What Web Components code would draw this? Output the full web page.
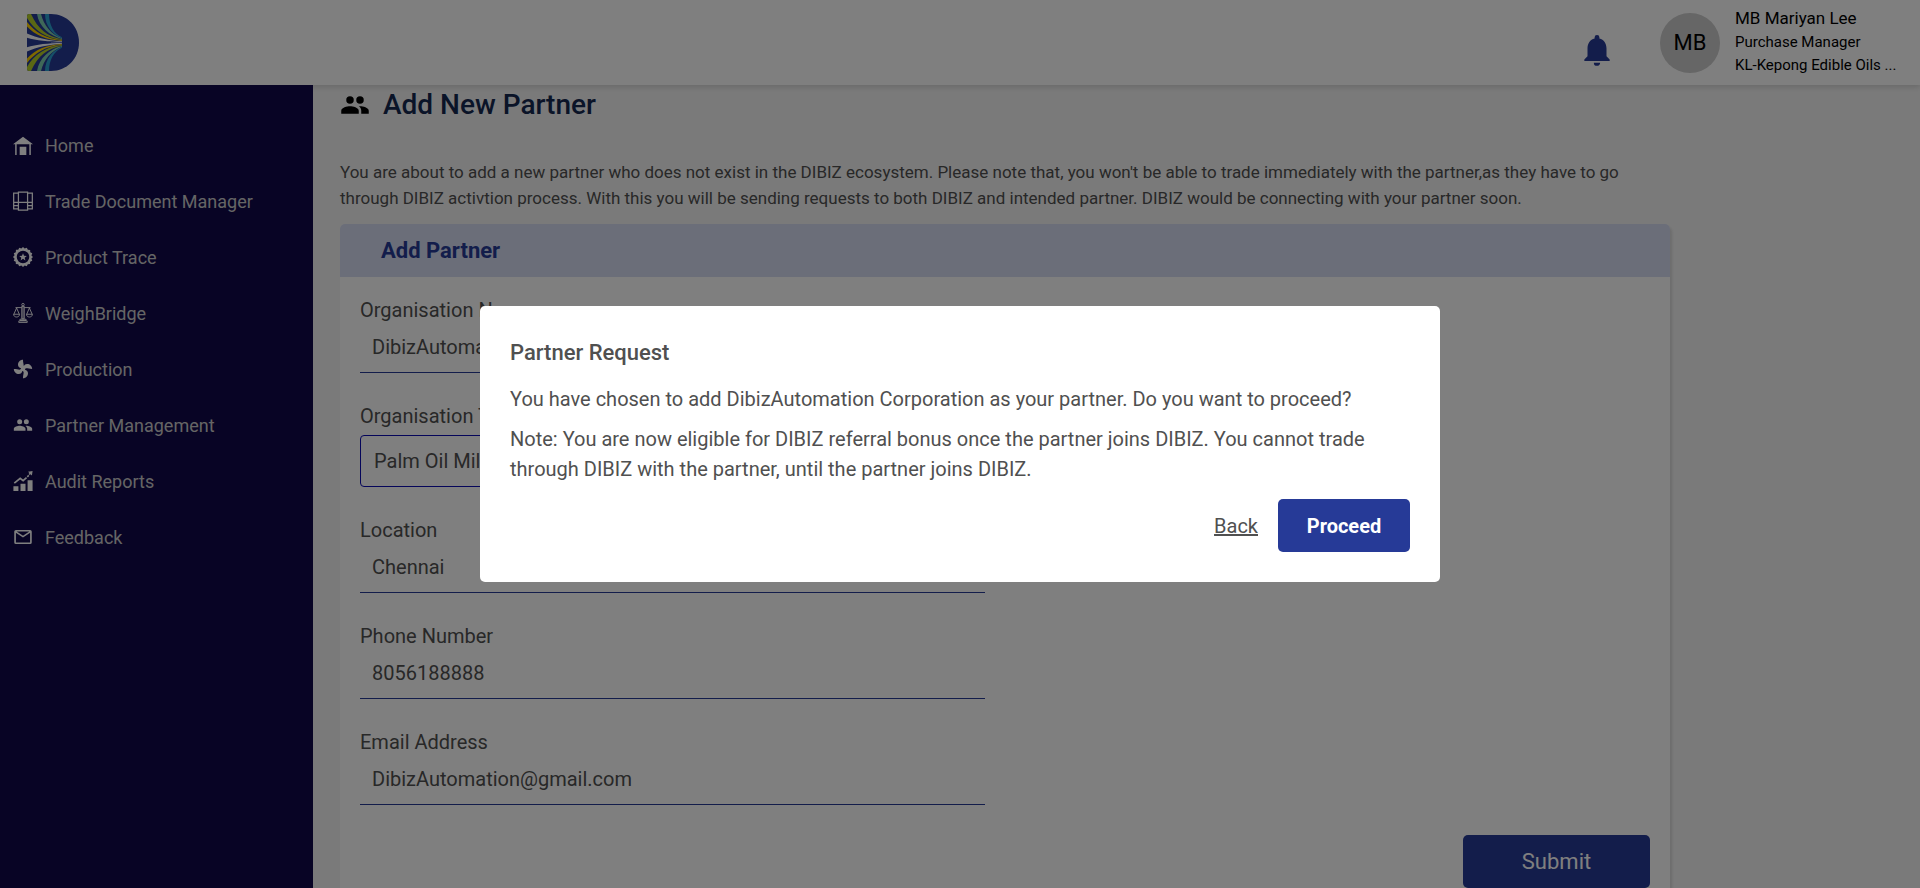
<!DOCTYPE html>
<html lang="en">
<head>
<meta charset="utf-8">
<meta name="viewport" content="width=device-width, initial-scale=1">
<title>Add New Partner</title>
<style>
  html, body { margin: 0; height: 100%; }
  body { font-family: Roboto, "Liberation Sans", sans-serif; color: #505050; background: #f5f5f5; overflow: hidden; }
</style>
</head>
<body>
<partner-app></partner-app>
<script>
const icons = {
  home: '<path d="M12 2 0 11.2h2.6V24h1.8V11.2h15.2V24h1.8V11.2H24zM8 14h8v10H8z"/>',
  docs: '<g fill="none" stroke="currentColor" stroke-width="1.5"><path d="M6.5 1.2h11v21.6h-11zM6.5 2.6H.8v18.8h5.700M17.500 2.600h5.700v18.800h-5.700M.8 13.500h22.400M.8 17.500h5.700M17.500 17.500h5.700"/></g>',
  trace: '<path fill-rule="evenodd" d="m12 0 2 1.900 2.600-1 1.200 2.500 2.800.1.100 2.800 2.400 1.300-1 2.500L24 12l-1.900 1.900 1 2.600-2.500 1.200-.1 2.800-2.800.1-1.200 2.500-2.500-1L12 24l-2-1.900-2.600 1-1.200-2.500-2.800-.1-.1-2.800L.9 16.500l1-2.500L0 12l1.900-2-1-2.500 2.500-1.300.1-2.800 2.800-.1L7.500.9l2.500 1zM12 4.500a7.500 7.500 0 1 0 0 15 7.500 7.500 0 0 0 0-15z"/><path d="m12 7.400 1.200 3.100 3.400.2-2.600 2.100.9 3.300-2.900-1.900-2.900 1.900.9-3.300-2.600-2.100 3.400-.2z"/>',
  scale: '<g fill="none" stroke="currentColor" stroke-width="1.100"><circle cx="12" cy="2" r="1.500"/><path d="M10.500 4h3v15h-3zM12 4v15M3 5.500h7.500M13.500 5.500H21M8.300 19.500h7.400v1.500H8.300zM7 21.500h10v2H7zM4.300 6 1 13.500M4.300 6l3.300 7.500M.7 13.500h7.200c0 2-1.600 3.300-3.600 3.300S.7 15.500.7 13.500zM19.700 6l-3.300 7.500M19.700 6l3.300 7.500M16.100 13.500h7.200c0 2-1.600 3.300-3.600 3.300s-3.600-1.300-3.600-3.300z"/></g>',
  fan: '<path d="M12.200 10.200C14.200 9.500 12 6 12 1 8.500 1 6 3.700 6 7c0 2.300 1.500 3.700 3.600 4.200C9 14.200 6 12 1 12c0 3.500 2.700 6 6 6 2.300 0 3.700-1.500 4.200-3.600C14.200 15 12 18 12 23c3.500 0 6-2.700 6-6 0-2.300-1.500-3.700-3.600-4.200C15 9.800 18 12 23 12c0-3.500-2.700-6-6-6-2.800 0-4 2-4.800 4.200z"/>',
  people: '<path d="M16 11a3 3 0 1 0 0-6 3 3 0 0 0 0 6zM8 11a3 3 0 1 0 0-6 3 3 0 0 0 0 6zM8 13c-2.330 0-7 1.170-7 3.500V19h14v-2.500c0-2.330-4.670-3.500-7-3.500zM16 13c-.29 0-.62.020-.97.050 1.160.84 1.970 1.970 1.970 3.450V19h6v-2.500c0-2.330-4.670-3.500-7-3.500z"/>',
  chart: '<path d="M.5 18.300h6V24h-6zM9 15.200h6V24H9zM17.500 11h6v13h-6zM23.500 0l-.8 5.500-1.700-1.700-1 1-1.300-1.300 1-1L18 .900zM18.300 4.600l1.300 1.300-1.800 1.800-1.300-1.300zM15.600 7.300l1.300 1.300-4.700 4.400-3.600-2.900-6.400 5.200-1.300-1.500 7.700-6.400 3.500 2.700z"/>',
  mail: '<path fill="none" stroke="currentColor" stroke-width="2" d="M3.500 4.500h17a1 1 0 0 1 1 1v13a1 1 0 0 1-1 1h-17a1 1 0 0 1-1-1v-13a1 1 0 0 1 1-1zM3 5.500l9 6 9-6"/>',
  bell: '<path d="M12 22c1.100 0 2-.9 2-2h-4a2 2 0 0 0 2 2zm6-6v-5c0-3.070-1.640-5.640-4.500-6.320V4a1.500 1.500 0 0 0-3 0v.68C7.630 5.360 6 7.920 6 11v5l-2 2v1h16v-1z"/>'
};

const define = (name, html) => {
  const template = document.createElement('template');
  template.innerHTML = html;
  customElements.define(name, class extends HTMLElement {
    constructor() {
      super();
      this.attachShadow({ mode: 'open' }).append(template.content.cloneNode(true));
    }
  });
};

customElements.define('ui-icon', class extends HTMLElement {
  connectedCallback() {
    const root = this.shadowRoot || this.attachShadow({ mode: 'open' });
    root.innerHTML = `<style>
      :host { display: block; flex: none; width: var(--icon-size, 20px); height: var(--icon-size, 20px); }
      svg { display: block; width: 100%; height: 100%; fill: currentColor; }
    </style><svg viewBox="0 0 24 24" aria-hidden="true">${icons[this.getAttribute('name')]}</svg>`;
  }
});

define('brand-logo', `
  <style>
    :host { display: block; flex: none; width: 52px; height: 57px; }
    svg { display: block; }
  </style>
  <svg width="52" height="57" viewBox="0 0 52 57" role="img" aria-label="Dibiz">
    <defs>
      <clipPath id="d"><path d="M2 0H24C40 0 52 12.500 52 28.500S40 57 24 57H2Q0 57 0 55V2Q0 0 2 0z"/></clipPath>
      <g id="rays">
        <path fill="#fff" d="M0 19.500C10 24 22 26.500 35 27.300V27.900C22 27.800 9 26.500 0 23.700z"/>
        <path fill="#ffd200" d="M0 8C8 18 18 24.500 35 26.200V26.900C19 26 8 21 0 12.500z"/>
        <path fill="#b5cf28" d="M0 0H4C11 15 20 22.500 35 25.200V25.900C19 24.500 7 16 0 4z"/>
        <path fill="#7fd0b0" d="M10 0H14C17 12 24 20 35 24.300V24.900C23 22 12 13 10 0z"/>
        <path fill="#2aa3d3" d="M18 0H22C22 11 27 20 35 23.300V24.100C26 21 18 12 18 0z"/>
      </g>
    </defs>
    <g clip-path="url(#d)">
      <path fill="#263a97" d="M0 0h52v57H0z"/>
      <use href="#rays"/><use href="#rays" transform="matrix(1 0 0 -1 0 57)"/>
      <path fill="#9aa6d8" d="M24 28.200h11v.6H24z"/>
    </g>
  </svg>`);

define('user-card', `
  <style>
    :host { display: flex; align-items: center; gap: 15px; color: #000; }
    .avatar { display: grid; place-items: center; width: 60px; height: 60px; border-radius: 50%; background: #ccc; }
    .who { display: grid; width: 165px; padding-bottom: 3px; }
    ::slotted(*) { white-space: nowrap; font-size: 15px; line-height: 23px; }
    ::slotted([slot=name]) { font-size: 17px; line-height: 25px; }
    ::slotted([slot=initials]) { font-size: 22px; line-height: 60px; }
  </style>
  <div class="avatar"><slot name="initials"></slot></div>
  <div class="who"><slot name="name"></slot><slot></slot></div>`);

define('app-header', `
  <style>
    :host { display: block; position: relative; z-index: 1; background: #fff; box-shadow: 0 2px 6px rgba(0,0,0,.15); }
    header { display: flex; align-items: center; justify-content: space-between; height: 85px; box-sizing: border-box; padding: 0 20px 0 27px; }
    .right { display: flex; align-items: center; gap: 44px; height: 100%; }
    button { border: 0; padding: 15px 0 0; background: none; color: #263a97; }
    ui-icon { --icon-size: 38px; }
  </style>
  <header>
    <brand-logo></brand-logo>
    <div class="right">
      <button type="button" aria-label="Notifications"><ui-icon name="bell"></ui-icon></button>
      <user-card>
        <span slot="initials">MB</span>
        <span slot="name">MB Mariyan Lee</span>
        <span>Purchase Manager</span>
        <span>KL-Kepong Edible Oils ...</span>
      </user-card>
    </div>
  </header>`);

define('nav-item', `
  <style>
    :host { display: block; }
    a { display: flex; align-items: center; gap: 12px; height: 56px; padding-left: 13px; color: #fff; text-decoration: none; font-size: 18px; }
    span { color: #cbcbcb; }
  </style>
  <a href="#"><slot name="icon"></slot><span><slot></slot></span></a>`);

define('side-nav', `
  <style>
    :host { display: block; background: #10084a; }
    nav { padding-top: 32px; }
  </style>
  <nav aria-label="Main">
    <nav-item><ui-icon slot="icon" name="home"></ui-icon>Home</nav-item>
    <nav-item><ui-icon slot="icon" name="docs"></ui-icon>Trade Document Manager</nav-item>
    <nav-item><ui-icon slot="icon" name="trace"></ui-icon>Product Trace</nav-item>
    <nav-item><ui-icon slot="icon" name="scale"></ui-icon>WeighBridge</nav-item>
    <nav-item><ui-icon slot="icon" name="fan"></ui-icon>Production</nav-item>
    <nav-item><ui-icon slot="icon" name="people"></ui-icon>Partner Management</nav-item>
    <nav-item><ui-icon slot="icon" name="chart"></ui-icon>Audit Reports</nav-item>
    <nav-item><ui-icon slot="icon" name="mail"></ui-icon>Feedback</nav-item>
  </nav>`);

customElements.define('text-field', class extends HTMLElement {
  connectedCallback() {
    const root = this.shadowRoot || this.attachShadow({ mode: 'open' });
    root.innerHTML = `<style>
      :host { display: block; font-size: 20px; line-height: 24px; }
      label { display: block; }
      input { display: block; width: 100%; height: 51px; box-sizing: border-box; padding: 0 12px; border: 0; border-bottom: 1px solid #263a97; background: none; color: #505050; font: inherit; outline: 0; }
    </style><label for="field"></label><input id="field">`;
    root.querySelector('label').textContent = this.getAttribute('label');
    const input = root.querySelector('input');
    input.type = this.getAttribute('type') || 'text';
    input.value = this.getAttribute('value');
  }
});

define('type-select', `
  <style>
    :host { display: grid; gap: 7px; font-size: 20px; line-height: 24px; }
    select { width: 100%; height: 52px; box-sizing: border-box; padding: 0 13px; border: 1px solid #0a0ab4; border-radius: 4px; background: none; color: #505050; font: inherit; appearance: none; }
  </style>
  <label for="type">Organisation Type</label>
  <select id="type"><option>Palm Oil Mill</option></select>`);

define('partner-form', `
  <style>
    :host { display: block; border-radius: 5px; background: #fff; box-shadow: 2px 3px 3px rgba(0,0,0,.12); }
    h2 { margin: 0; padding: 0 41px; border-radius: 5px 5px 0 0; background: #d6dcf2; color: #263a97; font-size: 22px; font-weight: 700; line-height: 53px; }
    form { padding: 21px 20px 30px; }
    .columns { display: grid; grid-template-columns: 1fr 1fr; gap: 40px; }
    .fields { display: grid; gap: 31px; }
    .actions { display: flex; justify-content: flex-end; padding-top: 30px; }
    button { width: 187px; height: 53px; border: 0; border-radius: 5px; background: #263a97; color: #fff; font: 22px Roboto, "Liberation Sans", sans-serif; }
  </style>
  <h2>Add Partner</h2>
  <form>
    <div class="columns"><div class="fields">
      <text-field label="Organisation Name" value="DibizAutomation Corporation"></text-field>
      <type-select></type-select>
      <text-field label="Location" value="Chennai"></text-field>
      <text-field label="Phone Number" type="tel" value="8056188888"></text-field>
      <text-field label="Email Address" type="email" value="DibizAutomation@gmail.com"></text-field>
    </div></div>
    <div class="actions"><button type="button">Submit</button></div>
  </form>`);

define('partner-page', `
  <style>
    :host { display: block; overflow: auto; scrollbar-width: none; }
    main { padding: 0 250px 0 27px; }
    h1 { display: flex; align-items: center; gap: 13px; margin: 0 0 34px; color: #142850; font-size: 28px; font-weight: 500; line-height: 40px; }
    ui-icon { --icon-size: 30px; color: #000; }
    p { margin: 0 0 13px; font-size: 17px; line-height: 26px; }
  </style>
  <main>
    <h1><ui-icon name="people"></ui-icon>Add New Partner</h1>
    <p>You are about to add a new partner who does not exist in the DIBIZ ecosystem. Please note that, you won't be able to trade immediately with the partner,as they have to go through DIBIZ activtion process. With this you will be sending requests to both DIBIZ and intended partner. DIBIZ would be connecting with your partner soon.</p>
    <partner-form></partner-form>
  </main>`);

define('confirm-dialog', `
  <style>
    :host { position: fixed; inset: 0; z-index: 2; display: grid; place-items: center; background: rgba(0,0,0,.5); }
    section { width: 50%; box-sizing: border-box; padding: 30px; border-radius: 5px; background: #fff; font-size: 20px; line-height: 30px; }
    h2 { margin: 0 0 15px; font-size: 22px; font-weight: 500; line-height: 33px; }
    ::slotted(p) { margin: 0 0 10px; }
    .actions { display: flex; justify-content: flex-end; align-items: center; gap: 20px; padding-top: 5px; }
    a { color: inherit; }
    button { width: 132px; height: 53px; border: 0; border-radius: 5px; background: #263a97; color: #fff; font: bold 20px Roboto, "Liberation Sans", sans-serif; }
  </style>
  <section role="dialog" aria-modal="true" aria-labelledby="title">
    <h2 id="title"><slot name="title"></slot></h2>
    <slot></slot>
    <div class="actions"><a href="#">Back</a><button type="button">Proceed</button></div>
  </section>`);

define('partner-app', `
  <style>
    :host { display: grid; grid-template: auto minmax(0, 1fr) / 313px minmax(0, 1fr); height: 100vh; }
    app-header { grid-column: 1 / -1; }
    side-nav { position: relative; z-index: 1; }
  </style>
  <app-header></app-header>
  <side-nav></side-nav>
  <partner-page></partner-page>
  <confirm-dialog>
    <span slot="title">Partner Request</span>
    <p>You have chosen to add DibizAutomation Corporation as your partner. Do you want to proceed?</p>
    <p>Note: You are now eligible for DIBIZ referral bonus once the partner joins DIBIZ. You cannot trade through DIBIZ with the partner, until the partner joins DIBIZ.</p>
  </confirm-dialog>`);
</script>
</body>
</html>
